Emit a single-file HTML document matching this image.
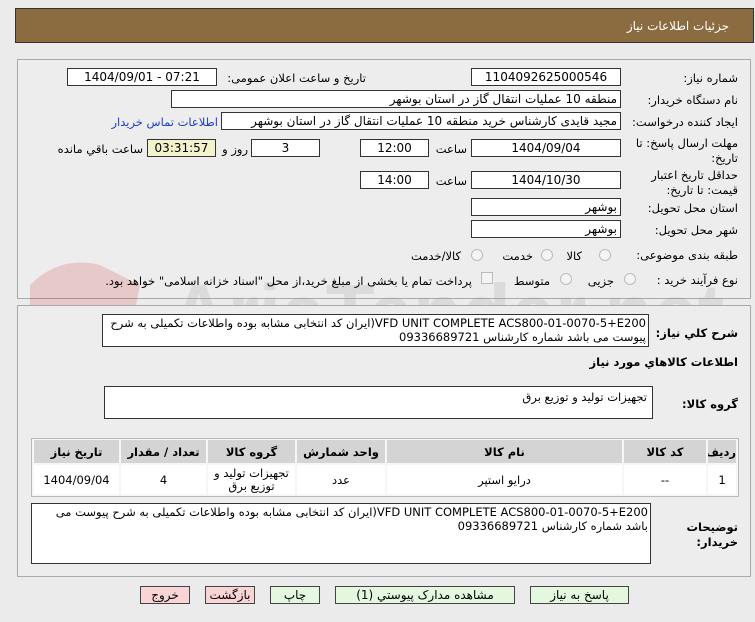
<!DOCTYPE html>
<html><head><meta charset="utf-8">
<style>
*{box-sizing:border-box;margin:0;padding:0}
body{width:755px;height:622px;background:#ebebeb;font-family:"DejaVu Sans","Liberation Sans",sans-serif;font-size:11.5px;color:#000;position:relative;overflow:hidden}
.a{position:absolute;white-space:nowrap}
.box{position:absolute;background:#fff;border:1px solid #333;height:18px;line-height:16px;text-align:center;font-size:12px}
.r{text-align:right;padding-right:3px}
.lbl{position:absolute;white-space:nowrap;direction:rtl;text-align:right}
.rad{position:absolute;width:12px;height:12px;border-radius:50%;border:1px solid #bbb;background:#f4f4f4}
table{border-collapse:separate;border-spacing:2px;table-layout:fixed}
td{text-align:center;font-size:11.5px;overflow:hidden}
.btn{position:absolute;top:586px;height:18px;border:1px solid #444;text-align:center;line-height:16px;font-size:12px}
</style></head><body>
<div class="a" style="left:15px;top:8px;width:739px;height:35px;background:#8b6c41;border:1px solid #333"></div>
<div class="lbl" style="right:26px;top:19px;color:#fff;font-size:12px">جزئیات اطلاعات نیاز</div>

<div class="a" style="left:17px;top:59px;width:734px;height:240px;border:1px solid #aaa;background:#ededed"></div>
<svg class="a" style="left:20px;top:245px" width="720" height="90"><g opacity="0.15" fill="#c00"><path d="M10 90 L10 40 Q40 10 80 20 L120 40 L110 90 Z"/></g><text x="150" y="95" font-size="80" font-weight="bold" fill="#999" opacity="0.2" font-family="Liberation Sans">AriaTender.net</text></svg>

<div class="lbl" style="right:17px;top:71px">شماره نیاز:</div>
<div class="box" style="left:471px;top:68px;width:150px">1104092625000546</div>
<div class="lbl" style="right:389px;top:71px">تاریخ و ساعت اعلان عمومی:</div>
<div class="box" style="left:67px;top:68px;width:150px">1404/09/01 - 07:21</div>

<div class="lbl" style="right:17px;top:93px">نام دستگاه خریدار:</div>
<div class="box r" style="left:171px;top:90px;width:450px;direction:rtl">منطقه 10 عملیات انتقال گاز در استان بوشهر</div>

<div class="lbl" style="right:17px;top:115px">ایجاد کننده درخواست:</div>
<div class="box r" style="left:221px;top:112px;width:400px;direction:rtl">مجید قایدی کارشناس خرید منطقه 10 عملیات انتقال گاز در استان بوشهر</div>
<div class="lbl" style="right:537px;top:115px;color:#1a3fd0">اطلاعات تماس خریدار</div>

<div class="lbl" style="right:17px;top:136px;line-height:15px">مهلت ارسال پاسخ: تا<br>تاریخ:</div>
<div class="box" style="left:471px;top:139px;width:150px">1404/09/04</div>
<div class="lbl" style="right:288px;top:142px">ساعت</div>
<div class="box" style="left:360px;top:139px;width:69px">12:00</div>
<div class="box" style="left:251px;top:139px;width:69px">3</div>
<div class="lbl" style="right:507px;top:142px">روز و</div>
<div class="box" style="left:147px;top:139px;width:69px;background:#f2f2cc">03:31:57</div>
<div class="lbl" style="right:612px;top:142px">ساعت باقي مانده</div>

<div class="lbl" style="right:17px;top:168px;line-height:15px">حداقل تاریخ اعتبار<br>قیمت: تا تاریخ:</div>
<div class="box" style="left:471px;top:171px;width:150px">1404/10/30</div>
<div class="lbl" style="right:288px;top:174px">ساعت</div>
<div class="box" style="left:360px;top:171px;width:69px">14:00</div>

<div class="lbl" style="right:17px;top:201px">استان محل تحویل:</div>
<div class="box r" style="left:471px;top:198px;width:150px">بوشهر</div>
<div class="lbl" style="right:17px;top:223px">شهر محل تحویل:</div>
<div class="box r" style="left:471px;top:220px;width:150px">بوشهر</div>

<div class="lbl" style="right:17px;top:248px">طبقه بندی موضوعی:</div>
<div class="rad" style="left:599px;top:249px"></div><div class="lbl" style="right:173px;top:249px">کالا</div>
<div class="rad" style="left:541px;top:249px"></div><div class="lbl" style="right:222px;top:249px">خدمت</div>
<div class="rad" style="left:471px;top:249px"></div><div class="lbl" style="right:294px;top:249px">کالا/خدمت</div>

<div class="lbl" style="right:17px;top:273px">نوع فرآیند خرید :</div>
<div class="rad" style="left:624px;top:273px"></div><div class="lbl" style="right:141px;top:274px">جزیی</div>
<div class="rad" style="left:560px;top:273px"></div><div class="lbl" style="right:205px;top:274px">متوسط</div>
<div class="a" style="left:481px;top:272px;width:12px;height:12px;border:1px solid #bbb;background:#f4f4f4"></div>
<div class="lbl" style="right:283px;top:274px">پرداخت تمام یا بخشی از مبلغ خرید،از محل "اسناد خزانه اسلامی" خواهد بود.</div>

<div class="a" style="left:17px;top:305px;width:734px;height:272px;border:1px solid #aaa;background:#ededed"></div>
<div class="lbl" style="right:17px;top:326px;font-weight:bold">شرح كلي نياز:</div>
<div class="a" style="left:102px;top:314px;width:547px;height:33px;background:#fff;border:1px solid #333;direction:rtl;text-align:right;white-space:normal;line-height:14px;padding:1px 2px;font-size:11.5px">VFD UNIT COMPLETE ACS800-01-0070-5+E200(ایران کد انتخابی مشابه بوده واطلاعات تکمیلی به شرح پیوست می باشد شماره کارشناس 09336689721</div>
<div class="lbl" style="right:17px;top:355px;font-weight:bold">اطلاعات كالاهاي مورد نياز</div>
<div class="lbl" style="right:17px;top:397px;font-weight:bold">گروه کالا:</div>
<div class="a" style="left:104px;top:386px;width:549px;height:33px;background:#fff;border:1px solid #333;direction:rtl;text-align:right;padding:3px 5px">تجهیزات تولید و توزیع برق</div>

<div class="a" style="left:31px;top:438px;width:708px;height:59px;border:1px solid #bbb;background:#f6f6f6">
<table dir="rtl" style="width:706px;margin-top:-1px">
<colgroup><col style="width:28px"><col style="width:82px"><col style="width:235px"><col style="width:88px"><col style="width:87px"><col style="width:85px"><col></colgroup>
<tr style="background:#d4d4d4;height:23px;font-weight:bold"><td>ردیف</td><td>کد کالا</td><td>نام کالا</td><td>واحد شمارش</td><td>گروه کالا</td><td>تعداد / مقدار</td><td>تاریخ نیاز</td></tr>
<tr style="background:#fff;height:29px"><td>1</td><td>--</td><td>درایو استپر</td><td>عدد</td><td style="line-height:13px;white-space:normal">تجهیزات تولید و توزیع برق</td><td>4</td><td>1404/09/04</td></tr>
</table></div>

<div class="lbl" style="right:17px;top:520px;font-weight:bold;line-height:15px">توضیحات<br>خریدار:</div>
<div class="a" style="left:31px;top:503px;width:620px;height:61px;background:#fff;border:1px solid #333;direction:rtl;text-align:right;white-space:normal;line-height:14px;padding:1px 2px">VFD UNIT COMPLETE ACS800-01-0070-5+E200(ایران کد انتخابی مشابه بوده واطلاعات تکمیلی به شرح پیوست می باشد شماره کارشناس 09336689721</div>

<div class="btn" style="left:140px;width:50px;background:#f8d4d4">خروج</div>
<div class="btn" style="left:205px;width:50px;background:#f8d4d4">بازگشت</div>
<div class="btn" style="left:270px;width:50px;background:#e4f8e0">چاپ</div>
<div class="btn" style="left:335px;width:180px;background:#e4f8e0">مشاهده مدارک پیوستي (1)</div>
<div class="btn" style="left:530px;width:99px;background:#e4f8e0">پاسخ به نیاز</div>
</body></html>
